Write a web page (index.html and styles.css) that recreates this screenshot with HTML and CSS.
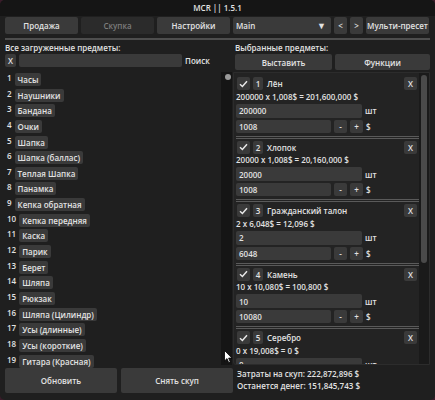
FILE: index.html
```html
<!DOCTYPE html>
<html>
<head>
<meta charset="utf-8">
<link rel="stylesheet" href="styles.css">
</head>
<body>
<div class="win">
  <div class="title">MCR || 1.5.1</div>
  <div class="toolbar">
    <div class="btn tab">Продажа</div>
    <div class="btn tab dim">Скупка</div>
    <div class="btn tab">Настройки</div>
    <div class="combo"><span>Main</span><span class="arrow">▼</span></div>
    <div class="btn sq">&lt;</div>
    <div class="btn sq">&gt;</div>
    <div class="btn multi">Мульти-пресет</div>
  </div>
  <div class="sep"></div>
  <div class="main">
    <div class="left">
      <div class="label">Все загруженные предметы:</div>
      <div class="search">
        <div class="btn xs">X</div>
        <div class="input wide"></div>
        <span>Поиск</span>
      </div>
      <div class="list">
        <div class="items">
          <div class="item"><span class="num">1</span><span class="chip">Часы</span></div>
          <div class="item"><span class="num">2</span><span class="chip">Наушники</span></div>
          <div class="item"><span class="num">3</span><span class="chip">Бандана</span></div>
          <div class="item"><span class="num">4</span><span class="chip">Очки</span></div>
          <div class="item"><span class="num">5</span><span class="chip">Шапка</span></div>
          <div class="item"><span class="num">6</span><span class="chip">Шапка (баллас)</span></div>
          <div class="item"><span class="num">7</span><span class="chip">Теплая Шапка</span></div>
          <div class="item"><span class="num">8</span><span class="chip">Панамка</span></div>
          <div class="item"><span class="num">9</span><span class="chip">Кепка обратная</span></div>
          <div class="item"><span class="num">10</span><span class="chip">Кепка передняя</span></div>
          <div class="item"><span class="num">11</span><span class="chip">Каска</span></div>
          <div class="item"><span class="num">12</span><span class="chip">Парик</span></div>
          <div class="item"><span class="num">13</span><span class="chip">Берет</span></div>
          <div class="item"><span class="num">14</span><span class="chip">Шляпа</span></div>
          <div class="item"><span class="num">15</span><span class="chip">Рюкзак</span></div>
          <div class="item"><span class="num">16</span><span class="chip">Шляпа (Цилиндр)</span></div>
          <div class="item"><span class="num">17</span><span class="chip">Усы (длинные)</span></div>
          <div class="item"><span class="num">18</span><span class="chip">Усы (короткие)</span></div>
          <div class="item"><span class="num">19</span><span class="chip">Гитара (Красная)</span></div>
        </div>
        <div class="vscroll"><div class="dot"></div></div>
      </div>
      <div class="bottom">
        <div class="btn big">Обновить</div>
        <div class="btn big">Снять скуп</div>
      </div>
    </div>
    <div class="right">
      <div class="label rl">Выбранные предметы:</div>
      <div class="actions">
        <div class="btn act1">Выставить</div>
        <div class="btn act2">Функции</div>
      </div>
      <div class="panel">
        <div class="entries">
          <div class="entry">
            <div class="hdr"><div class="btn chk"><svg width="9" height="8" viewBox="0 0 9 8"><path d="M1 4.2 L3.4 6.5 L8 1.3" fill="none" stroke="#e8e8e8" stroke-width="1.5"/></svg></div><div class="btn idx">1</div><span class="name">Лён</span><div class="btn xb">X</div></div>
            <div class="formula">200000 x 1,008$ = 201,600,000 $</div>
            <div class="row"><div class="input qty">200000</div><span>шт</span></div>
            <div class="row r2"><div class="input price">1008</div><div class="btn pm">-</div><div class="btn pm">+</div><span>$</span></div>
            <div class="dsep"></div>
          </div>
          <div class="entry">
            <div class="hdr"><div class="btn chk"><svg width="9" height="8" viewBox="0 0 9 8"><path d="M1 4.2 L3.4 6.5 L8 1.3" fill="none" stroke="#e8e8e8" stroke-width="1.5"/></svg></div><div class="btn idx">2</div><span class="name">Хлопок</span><div class="btn xb">X</div></div>
            <div class="formula">20000 x 1,008$ = 20,160,000 $</div>
            <div class="row"><div class="input qty">20000</div><span>шт</span></div>
            <div class="row r2"><div class="input price">1008</div><div class="btn pm">-</div><div class="btn pm">+</div><span>$</span></div>
            <div class="dsep"></div>
          </div>
          <div class="entry">
            <div class="hdr"><div class="btn chk"><svg width="9" height="8" viewBox="0 0 9 8"><path d="M1 4.2 L3.4 6.5 L8 1.3" fill="none" stroke="#e8e8e8" stroke-width="1.5"/></svg></div><div class="btn idx">3</div><span class="name">Гражданский талон</span><div class="btn xb">X</div></div>
            <div class="formula">2 x 6,048$ = 12,096 $</div>
            <div class="row"><div class="input qty">2</div><span>шт</span></div>
            <div class="row r2"><div class="input price">6048</div><div class="btn pm">-</div><div class="btn pm">+</div><span>$</span></div>
            <div class="dsep"></div>
          </div>
          <div class="entry">
            <div class="hdr"><div class="btn chk"><svg width="9" height="8" viewBox="0 0 9 8"><path d="M1 4.2 L3.4 6.5 L8 1.3" fill="none" stroke="#e8e8e8" stroke-width="1.5"/></svg></div><div class="btn idx">4</div><span class="name">Камень</span><div class="btn xb">X</div></div>
            <div class="formula">10 x 10,080$ = 100,800 $</div>
            <div class="row"><div class="input qty">10</div><span>шт</span></div>
            <div class="row r2"><div class="input price">10080</div><div class="btn pm">-</div><div class="btn pm">+</div><span>$</span></div>
            <div class="dsep"></div>
          </div>
          <div class="entry">
            <div class="hdr"><div class="btn chk"><svg width="9" height="8" viewBox="0 0 9 8"><path d="M1 4.2 L3.4 6.5 L8 1.3" fill="none" stroke="#e8e8e8" stroke-width="1.5"/></svg></div><div class="btn idx">5</div><span class="name">Серебро</span><div class="btn xb">X</div></div>
            <div class="formula">0 x 19,008$ = 0 $</div>
            <div class="row"><div class="input qty">0</div><span>шт</span></div>
          </div>
        </div>
        <div class="vscroll rs"><div class="grab"></div></div>
      </div>
      <div class="totals">
        <div>Затраты на скуп: 222,872,896 $</div>
        <div>Останется денег: 151,845,743 $</div>
      </div>
    </div>
  </div>
  <svg class="cursor" width="9" height="14" viewBox="0 0 9 14"><path d="M0.5 0.5 L0.5 11 L3 8.6 L4.8 12.8 L6.3 12.1 L4.6 8.1 L8 8.1 Z" fill="#ffffff" stroke="#000" stroke-width="0.8"/></svg>
</div>
</body>
</html>
```

FILE: styles.css
```css
* { box-sizing: border-box; margin: 0; padding: 0; }
html, body { width: 435px; height: 400px; overflow: hidden; }
body {
  background: #3a1c2a;
  font-family: "Open Sans", "Noto Sans", sans-serif;
  font-weight: 600;
  font-size: 8px;
  color: #e2e2e2;
}
.win {
  width: 435px;
  height: 400px;
  background: #1f1f1f;
  border-radius: 5px;
  overflow: hidden;
  display: flex;
  flex-direction: column;
  position: relative;
}
.title {
  flex: none;
  height: 16px;
  line-height: 16px;
  background: #151515;
  text-align: center;
}
.btn {
  background: #3a3a3a;
  border-radius: 2px;
  display: flex;
  align-items: center;
  justify-content: center;
  flex: none;
}
.toolbar {
  flex: none;
  display: flex;
  height: 17px;
  margin: 1px 5px 0;
  gap: 3px;
}
.tab { width: 73px; }
.dim { background: #2b2b2b; color: #7c7c7c; }
.combo {
  width: 98px;
  background: #3a3a3a;
  border-radius: 2px;
  display: flex;
  align-items: center;
  justify-content: space-between;
  padding: 0 5px 0 3px;
}
.arrow { font-size: 9px; }
.sq { width: 13px; }
.multi { width: 63px; }
.sep {
  flex: none;
  height: 2px;
  margin: 4px 5px 0;
  background: #4e4e4e;
}
.main {
  flex: 1;
  display: flex;
  margin-top: 3px;
  padding-left: 5px;
}
.left { width: 228px; display: flex; flex-direction: column; }
.right { width: 197px; display: flex; flex-direction: column; }
.label { height: 10px; line-height: 10px; }
.rl { padding-left: 2px; }
.search {
  display: flex;
  align-items: center;
  gap: 3px;
  height: 13px;
  margin-top: 1px;
}
.xs { width: 11px; height: 13px; }
.input {
  background: #3a3a3a;
  border-radius: 2px;
  padding-left: 3px;
  display: flex;
  align-items: center;
}
.wide { width: 163px; height: 13px; }
.list {
  margin-top: 5px;
  height: 293px;
  display: flex;
}
.items {
  width: 216px;
  padding: 1px 0 0 2px;
  display: flex;
  flex-direction: column;
  gap: 2.65px;
}
.item { display: flex; align-items: flex-start; gap: 3px; height: 13px; flex: none; }
.num { line-height: 9px; }
.chip {
  background: #3a3a3a;
  border-radius: 2px;
  height: 13px;
  line-height: 13px;
  padding: 0 3px;
}
.vscroll {
  width: 11px;
  background: #151515;
  padding: 2px 1px 0 4px;
}
.dot { width: 6px; height: 6px; border-radius: 3px; background: #9a9a9a; }
.bottom { display: flex; gap: 4px; margin-top: 3px; height: 25px; }
.big { height: 25px; width: 112px; }
.actions { display: flex; gap: 3px; height: 16px; margin-top: 1px; padding-left: 2px; }
.act1 { width: 97px; height: 16px; }
.act2 { width: 95px; height: 16px; }
.panel {
  margin-top: 2px;
  height: 293px;
  background: #232323;
  border: 1px solid #2c2c2c;
  border-bottom-left-radius: 3px;
  display: flex;
  overflow: hidden;
}
.entries {
  flex: 1;
  padding: 4px 0 0 2px;
  overflow: hidden;
}
.entry { display: flex; flex-direction: column; }
.hdr { display: flex; align-items: center; height: 13px; gap: 3px; padding-right: 2px; }
.chk { width: 13px; height: 13px; margin-left: 1px; }
.idx { width: 10px; height: 13px; }
.name { flex: 1; padding-left: 1px; }
.xb { width: 13px; height: 13px; }
.formula { height: 11px; line-height: 11px; margin-top: 0.5px; }
.row { display: flex; align-items: center; gap: 3px; margin-top: 2px; }
.qty { width: 126px; height: 14px; }
.price { width: 95px; height: 13px; }
.pm { width: 13px; height: 13px; }
.dsep {
  height: 3px;
  margin: 3px 0 2px;
  border-top: 1px solid #5a5a5a;
  border-bottom: 1px solid #5a5a5a;
}
.rs { width: 10px; background: #1a1a1a; padding: 2px 2px 0 2px; }
.grab { width: 6px; height: 188px; border-radius: 3px; background: #4a4a4a; }
.totals { padding-left: 4px; margin-top: 3px; line-height: 12px; }
.cursor { position: absolute; left: 224px; top: 350px; }
```
